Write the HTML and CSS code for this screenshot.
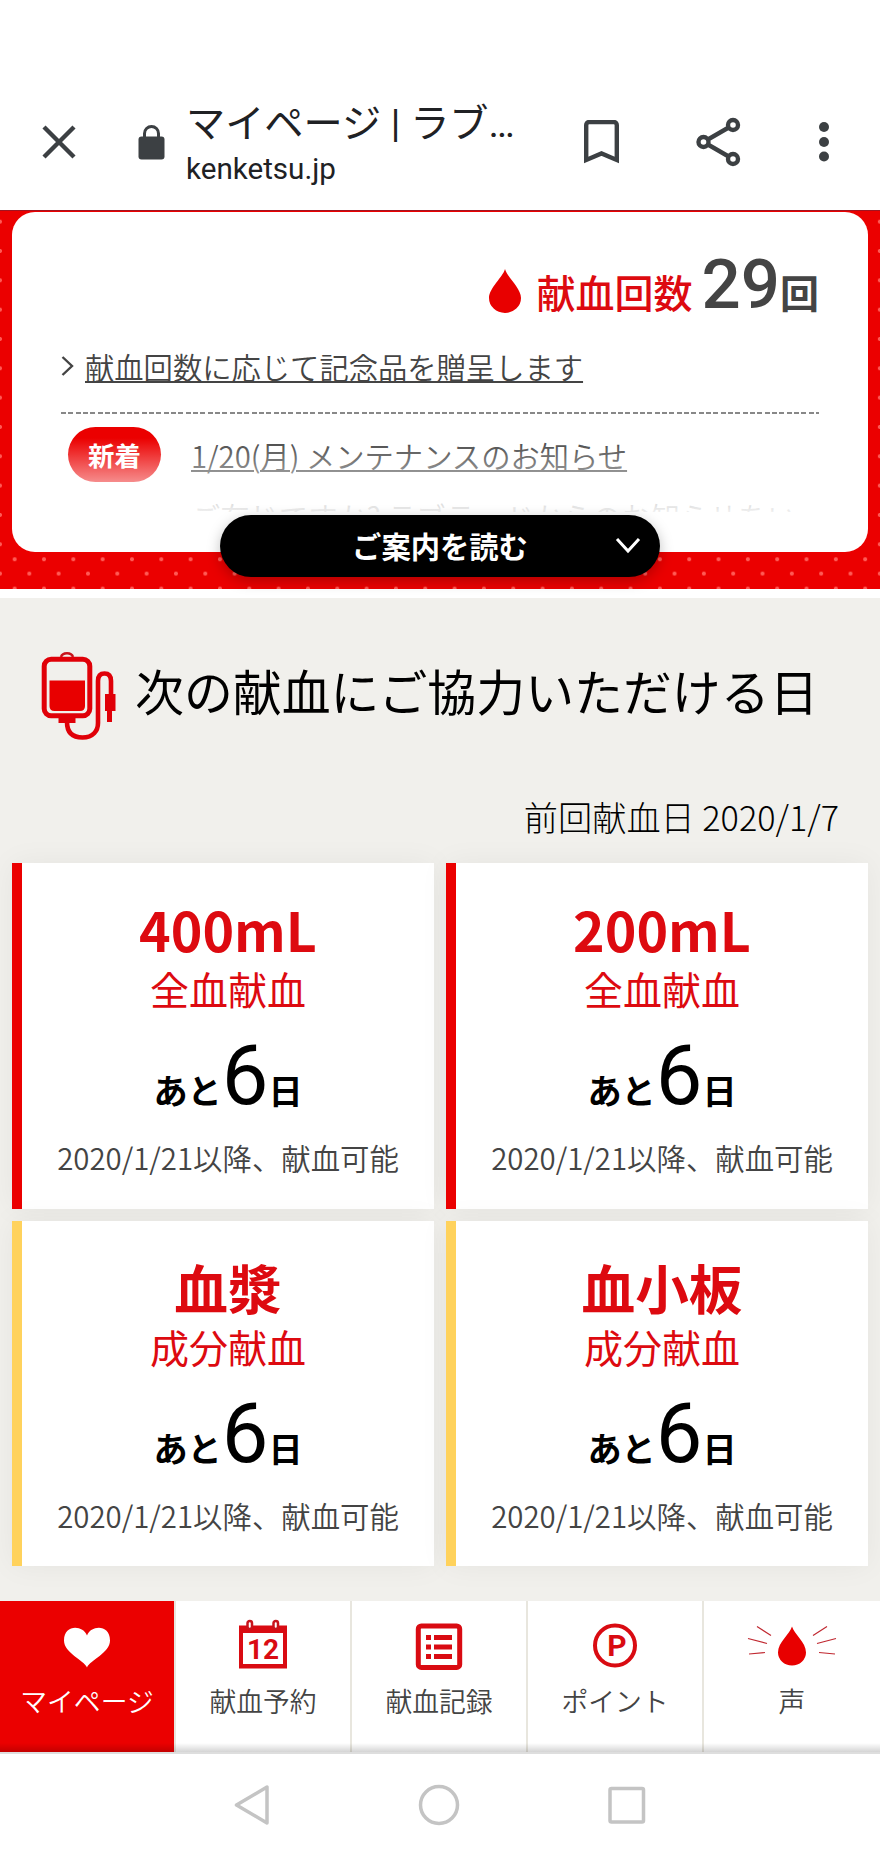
FILE: index.html
```
<!DOCTYPE html>
<html lang="ja">
<head>
    <meta charset="UTF-8">
    <meta name="viewport" content="width=device-width, initial-scale=1.0">
    <title>マイページ | ラブラッド</title>
    <link rel="stylesheet" href="styles.css">
</head>
<body>
<header class="browser-bar">
    <svg class="icon-close" width="34" height="34" viewBox="0 0 34 34"><path d="M2 2l30 30M32 2L2 32"/></svg>
    <svg class="icon-lock" width="27" height="35" viewBox="0 0 27 35">
        <rect x="0.5" y="11.5" width="26" height="23" rx="3" fill="#3c4043"/>
        <path d="M6.5 13V8.500a7 7 0 0 1 14 0V13" fill="none" stroke="#3c4043" stroke-width="3"/>
    </svg>
    <div class="page-info">
        <div class="page-title">マイページ | ラブ…</div>
        <div class="page-domain">kenketsu.jp</div>
    </div>
    <svg class="icon-bookmark" width="35" height="44" viewBox="0 0 35 44"><path d="M2.200 40V5a3 3 0 0 1 3-3h24.600a3 3 0 0 1 3 3v35L17.500 33.500z"/></svg>
    <svg class="icon-share" width="45" height="50" viewBox="0 0 45 50">
        <path d="M37 8L7.500 25 37 42"/>
        <circle cx="37" cy="8" r="5"/>
        <circle cx="7.500" cy="25" r="5"/>
        <circle cx="37" cy="42" r="5"/>
    </svg>
    <svg class="icon-more" width="10" height="40" viewBox="0 0 10 40">
        <circle cx="5" cy="5" r="5"/><circle cx="5" cy="20" r="5"/><circle cx="5" cy="34.500" r="5"/>
    </svg>
</header>

<section class="profile">
    <div class="profile-card">
        <div class="count">
            <svg width="32" height="44" viewBox="0 0 32 44"><path d="M16 0C18 8 32 19 32 29a16 15 0 0 1-32 0C0 19 14 8 16 0z" fill="#e80000"/></svg>
            <span class="count-label">献血回数</span>
            <span class="count-number">29</span>
            <span class="count-unit">回</span>
        </div>
        <div class="gift">
            <svg width="13" height="20" viewBox="0 0 13 20"><path d="M1.500 1l9.500 9-9.500 9"/></svg>
            <a href="#">献血回数に応じて記念品を贈呈します</a>
        </div>
        <div class="news">
            <div class="news-item">
                <span class="badge">新着</span>
                <a href="#">1/20(月) メンテナンスのお知らせ</a>
            </div>
            <div class="news-item second">
                <a href="#">ご存じですか? ラブラッドからのお知らせをい</a>
            </div>
        </div>
    </div>
    <button class="read-button">
        ご案内を読む
        <svg width="26" height="17" viewBox="0 0 26 17"><path d="M2 2l11 12L24 2"/></svg>
    </button>
</section>

<main class="next">
    <h1>
        <svg width="75" height="89" viewBox="0 0 75 89" fill="none" stroke="#e00008">
            <path d="M20 5a6.200 5 0 0 1 12 0" stroke-width="2.500" stroke="#c8141c"/>
            <rect x="3.200" y="7.200" width="45.600" height="56.500" rx="7" stroke-width="5"/>
            <path d="M8.500 28.500h35.500V54q0 5-5 5H13.500q-5 0-5-5z" fill="#e80000" stroke="none"/>
            <path d="M17.500 64h17v7h-17z" fill="#e00008" stroke="none"/>
            <path d="M26 70c0 10 5 15.500 15.500 15.500S57 79 57 71V29q0-7.500 6.500-7.500T70 29v15" stroke-width="4.600"/>
            <path d="M64 42h10.500v17H71v11h-5V59h-2z" fill="#e00008" stroke="none"/>
        </svg>
        <span>次の献血にご協力いただける日</span>
    </h1>
    <p class="last-date">前回献血日 2020/1/7</p>
    <div class="cards">
        <div class="card">
            <h2>400mL</h2>
            <p class="type">全血献血</p>
            <p class="remain">あと<span>6</span>日</p>
            <p class="date">2020/1/21以降、献血可能</p>
        </div>
        <div class="card">
            <h2>200mL</h2>
            <p class="type">全血献血</p>
            <p class="remain">あと<span>6</span>日</p>
            <p class="date">2020/1/21以降、献血可能</p>
        </div>
        <div class="card component">
            <h2>血漿</h2>
            <p class="type">成分献血</p>
            <p class="remain">あと<span>6</span>日</p>
            <p class="date">2020/1/21以降、献血可能</p>
        </div>
        <div class="card component">
            <h2>血小板</h2>
            <p class="type">成分献血</p>
            <p class="remain">あと<span>6</span>日</p>
            <p class="date">2020/1/21以降、献血可能</p>
        </div>
    </div>
</main>

<nav class="tabs">
    <a href="#" class="active">
        <svg width="48" height="52" viewBox="0 0 48 52"><path d="M24 49.500C21 42 1 35 1 22.500 1 6 20 7 24 17.500 28 7 47 6 47 22.500 47 35 27 42 24 49.500z" fill="#fff"/></svg>
        マイページ
    </a>
    <a href="#">
        <svg width="50" height="52" viewBox="0 0 50 52">
            <path d="M1 7.500h48V50.500H1zM5 15v31h40V15z" fill="#d90b12" fill-rule="evenodd"/>
            <rect x="9.500" y="3" width="4.500" height="8" rx="2.200" fill="#fff" stroke="#c8141c" stroke-width="2.500"/>
            <rect x="35.500" y="3" width="4.500" height="8" rx="2.200" fill="#fff" stroke="#c8141c" stroke-width="2.500"/>
            <text class="calendar-day" x="25" y="40.500">12</text>
        </svg>
        献血予約
    </a>
    <a href="#">
        <svg width="48" height="52" viewBox="0 0 48 52">
            <rect x="3.300" y="8" width="41.400" height="41.400" rx="3" fill="none" stroke="#d90b12" stroke-width="5"/>
            <path d="M11 17h5v5h-5zM19 17h18v5H19zM11 26.500h5v5h-5zM19 26.500h18v5H19zM11 36h5v5h-5zM19 36h18v5H19z" fill="#d90b12"/>
        </svg>
        献血記録
    </a>
    <a href="#">
        <svg width="48" height="52" viewBox="0 0 48 52">
            <circle cx="24" cy="27.500" r="20" fill="none" stroke="#d90b12" stroke-width="4"/>
            <text class="point-mark" x="26" y="38">P</text>
        </svg>
        ポイント
    </a>
    <a href="#">
        <svg width="90" height="52" viewBox="0 0 90 52">
            <path d="M45 8.500C47 16 59 24 59 34.500a14 13 0 0 1-28 0C31 24 43 16 45 8.500z" fill="#e80000"/>
            <path d="M10 8.500l14 9M1 20.500l19 5M2 36l16-1.500M80 8.500l-14 9M89 20.500l-19 5M88 36l-16-1.500" stroke="#c02830" stroke-width="1.200"/>
        </svg>
        声
    </a>
</nav>

<footer class="system-nav">
    <svg width="36" height="42" viewBox="0 0 36 42"><path d="M33 3v36L2.500 21z"/></svg>
    <svg width="42" height="42" viewBox="0 0 42 42"><circle cx="21" cy="21" r="18.500"/></svg>
    <svg width="38" height="42" viewBox="0 0 38 42"><rect x="2" y="4.500" width="33.500" height="33.500" rx="1.500"/></svg>
</footer>
</body>
</html>
```
FILE: styles.css
```
:root {
    --red: #eb0000;
    --text-red: #dd0a10;
    --text-gray: #444;
    --beige: #f1f0ec;
    --line: #e8e6de;
}

* {
    margin: 0;
    padding: 0;
    box-sizing: border-box;
}

body {
    width: 880px;
    height: 1858px;
    overflow: hidden;
    background: #fff;
    color: #000;
    font-family: "Noto Sans CJK JP", sans-serif;
}

svg {
    display: block;
    flex: none;
}

a {
    color: inherit;
}

/* Browser bar */
.browser-bar {
    height: 210px;
    padding: 74px 51px 0 42px;
    display: flex;
    align-items: center;
    fill: none;
    stroke: #3c4043;
    stroke-width: 4.4;
}

.icon-lock {
    margin-left: 62px;
    stroke: none;
}

.page-info {
    width: 340px;
    margin: 14px 0 0 21px;
    font-family: Roboto, "Noto Sans CJK JP", sans-serif;
    color: #202124;
    white-space: nowrap;
}

.page-title {
    font-size: 39.2px;
    line-height: 40px;
}

.page-domain {
    font-size: 29.6px;
    line-height: 51px;
}

.icon-bookmark {
    margin-left: 58px;
}

.icon-share {
    margin-left: 77px;
}

.icon-share circle {
    fill: #fff;
}

.icon-more {
    margin-left: auto;
    fill: #3c4043;
    stroke: none;
}

/* Profile */
.profile {
    position: relative;
    height: 379px;
    padding: 1px 12px 0;
    border-top: 1px solid #a01420;
    background-color: var(--red);
    background-image:
        radial-gradient(circle, #ff5a55 1.6px, transparent 2.4px),
        radial-gradient(circle, #ff5a55 1.6px, transparent 2.4px);
    background-size: 29.33px 29.33px;
    background-position: 0 11px, 14.67px -4px;
}

.profile-card {
    height: 340px;
    padding: 31px 49px 0;
    background: #fff;
    border-radius: 23px;
}

.count {
    height: 84px;
    display: flex;
    justify-content: flex-end;
    align-items: baseline;
    line-height: 84px;
    color: var(--text-gray);
}

.count svg {
    align-self: center;
    margin: 12px 16px 0 0;
}

.count-label {
    font-size: 39px;
    font-weight: 500;
    color: var(--text-red);
}

.count-number {
    margin-left: 9px;
    font-family: Roboto, sans-serif;
    font-size: 69px;
    font-weight: 500;
}

.count-unit {
    font-size: 39px;
    font-weight: 700;
}

.gift {
    height: 87px;
    padding-bottom: 10px;
    display: flex;
    align-items: center;
    gap: 11px;
    font-size: 29.3px;
    line-height: 44px;
    font-weight: 350;
    color: var(--text-gray);
    background: repeating-linear-gradient(90deg, #888 0 5px, transparent 5px 7.33px) bottom / 100% 2px no-repeat;
}

.gift svg {
    fill: none;
    stroke: var(--text-gray);
    stroke-width: 2.4;
}

.gift a,
.news a {
    text-decoration-thickness: 2px;
    text-underline-offset: 2px;
}

.news {
    position: relative;
    height: 98px;
    padding: 13px 0 0 7px;
    overflow: hidden;
    font-size: 29.3px;
    font-weight: 350;
    color: var(--text-gray);
}

/* White fade over the collapsed list */
.news::after {
    content: '';
    position: absolute;
    inset: 24px 0 0;
    background: linear-gradient(rgba(255, 255, 255, 0), rgba(255, 255, 255, 0.92));
}

.news-item {
    height: 61px;
    display: flex;
    align-items: flex-start;
    line-height: 57px;
    white-space: nowrap;
}

.news-item.second {
    padding-left: 123px;
}

.badge {
    width: 93px;
    height: 55px;
    margin-right: 30px;
    border-radius: 28px;
    background: var(--red);
    color: #fff;
    font-size: 26.4px;
    font-weight: 700;
    line-height: 56px;
    text-align: center;
}

.read-button {
    position: absolute;
    left: 220px;
    top: 304px;
    width: 440px;
    height: 62px;
    border: none;
    border-radius: 31px;
    background: #000;
    box-shadow: 0 4px 14px rgba(0, 0, 0, 0.25);
    color: #fff;
    font: 700 29.3px/60px "Noto Sans CJK JP", sans-serif;
    padding-bottom: 2px;
}

.read-button svg {
    position: absolute;
    right: 19px;
    top: 22px;
    fill: none;
    stroke: #fff;
    stroke-width: 3;
}

/* Next donation */
.next {
    height: 1003px;
    margin-top: 9px;
    padding: 54px 12px 0;
    background: var(--beige);
}

.next h1 {
    height: 89px;
    padding-left: 29px;
    display: flex;
    align-items: flex-start;
    gap: 19px;
    font-size: 48.9px;
    font-weight: 400;
    line-height: 76px;
    white-space: nowrap;
}

.last-date {
    padding: 50px 29px 22px 0;
    font-size: 34.2px;
    font-weight: 300;
    line-height: 50px;
    text-align: right;
}

.cards {
    display: grid;
    grid-template-columns: 1fr 1fr;
    gap: 12px;
}

.card {
    height: 345.5px;
    padding-top: 38px;
    border-left: 10px solid var(--red);
    background: #fff;
    box-shadow: 0 0 28px rgba(0, 0, 0, 0.05);
    text-align: center;
}

.card.component {
    border-left-color: #ffd25c;
}

.card h2 {
    font-size: 53.7px;
    line-height: 56px;
    color: var(--text-red);
}

.card .type {
    font-size: 39px;
    line-height: 62px;
    color: var(--text-red);
}

.card .remain {
    height: 100px;
    margin-top: 7px;
    font-size: 34.2px;
    font-weight: 700;
    line-height: 100px;
}

.card .remain span {
    font-family: Roboto, sans-serif;
    font-size: 83px;
    font-weight: 400;
}

.card .date {
    margin-top: 6px;
    font-size: 29.4px;
    font-weight: 350;
    line-height: 50px;
    color: var(--text-gray);
    white-space: nowrap;
}

/* Bottom tabs */
.tabs {
    position: relative;
    height: 153px;
    display: grid;
    grid-template-columns: repeat(5, 1fr);
    border-bottom: 2px solid #dedede;
}

.tabs::after {
    content: '';
    position: absolute;
    left: 0;
    right: 0;
    bottom: 0;
    height: 9px;
    background: linear-gradient(transparent, rgba(0, 0, 0, 0.17));
}

.tabs a {
    padding-top: 17px;
    display: flex;
    flex-direction: column;
    align-items: center;
    border-right: 2px solid var(--line);
    color: var(--text-gray);
    font-size: 26.8px;
    font-weight: 350;
    line-height: 62px;
    text-decoration: none;
}

.tabs a.active {
    background: var(--red);
    background-clip: padding-box;
    color: #fff;
}

.tabs a:last-child {
    border-right: none;
}

.calendar-day,
.point-mark {
    text-anchor: middle;
    fill: #d90b12;
    font-family: Roboto, sans-serif;
    font-weight: 700;
}

.calendar-day {
    font-size: 28px;
}

.point-mark {
    font-size: 30px;
}

/* System navigation */
.system-nav {
    height: 104px;
    padding-bottom: 2px;
    display: flex;
    justify-content: center;
    align-items: center;
    gap: 148px;
    fill: none;
    stroke: #c4c4c4;
    stroke-width: 3.5;
    stroke-linejoin: round;
}
```
